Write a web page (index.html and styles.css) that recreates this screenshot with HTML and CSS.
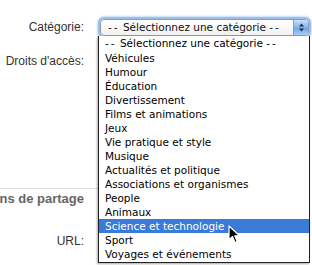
FILE: index.html
```html
<!DOCTYPE html>
<html>
    <head>
        <meta charset="UTF-8">
        <title>Catégorie</title>
        <link rel="stylesheet" href="styles.css">
    </head>
    <body>
        <div class="video-form">
            <div class="form-row row-category">
                <label class="form-label">Catégorie:</label>
                <div class="select-box">
                    <span class="select-value"><span class="dashes">--</span> Sélectionnez une catégorie <span class="dashes">--</span></span>
                    <span class="select-arrows">
                        <svg width="7" height="11" viewBox="0 0 7 11">
                            <path d="M3.5 1.5 L6 4.5 H1 Z" fill="#1d2b45"/>
                            <path d="M3.5 9.5 L6 6.5 H1 Z" fill="#1d2b45"/>
                        </svg>
                    </span>
                </div>
            </div>
            <div class="form-row row-rights">
                <label class="form-label">Droits d'accès:</label>
            </div>
            <div class="form-section">
                <h3 class="section-title"><span>Options de partage</span></h3>
            </div>
            <div class="form-row row-url">
                <label class="form-label">URL:</label>
            </div>

            <ul class="category-menu">
                <li><span class="dashes">--</span> Sélectionnez une catégorie <span class="dashes">--</span></li>
                <li>Véhicules</li>
                <li>Humour</li>
                <li>Éducation</li>
                <li>Divertissement</li>
                <li>Films et animations</li>
                <li>Jeux</li>
                <li>Vie pratique et style</li>
                <li>Musique</li>
                <li>Actualités et politique</li>
                <li>Associations et organismes</li>
                <li>People</li>
                <li>Animaux</li>
                <li class="is-hover">Science et technologie</li>
                <li>Sport</li>
                <li>Voyages et événements</li>
            </ul>

            <svg class="mouse-cursor" width="13" height="19" viewBox="0 0 13 19">
                <path d="M1 1 L1 15 L4.5 11.5 L7 17.5 L9.2 16.6 L6.8 10.8 L11.5 10.8 Z" fill="#000" stroke="#fff" stroke-width="1.2" stroke-linejoin="round"/>
            </svg>
        </div>
    </body>
</html>
```

FILE: styles.css
```css
* {
    padding: 0;
    margin: 0;
    box-sizing: border-box;
}

html, body {
    height: 100%;
    width: 100%;
    background-color: #fff;
    overflow: hidden;
}

.video-form {
    position: relative;
    height: 100%;
    width: 100%;
    font-family: "Liberation Sans", Arial, sans-serif;
    font-size: 12px;
    color: #333;
}

.form-row {
    display: flex;
    align-items: center;
}

.form-label {
    width: 84px;
    text-align: right;
    flex-shrink: 0;
}

.row-category {
    padding-top: 18px;
    height: 36px;
}

.row-rights {
    margin-top: 17px;
    height: 16px;
}

.form-section {
    margin-top: 119px;
    width: 100px;
    border-top: 1px solid #ddd;
}

.section-title {
    display: flex;
    justify-content: flex-end;
    width: 84px;
    overflow: hidden;
    white-space: nowrap;
    margin-top: 2px;
    height: 15px;
    line-height: 15px;
    font-size: 13px;
    font-weight: bold;
    color: #666;
}

.row-url {
    margin-top: 27px;
    height: 16px;
}

.dashes {
    letter-spacing: 2px;
}

.select-box {
    display: flex;
    align-items: center;
    margin-left: 16px;
    width: 209px;
    height: 17px;
    border: 1px solid #8c9bb0;
    border-radius: 4px;
    background: linear-gradient(#fff, #f1f1f1);
    box-shadow: 0 0 0 2px #9cbfe9, 0 0 2px 3px #c9ddf5;
    font-family: "DejaVu Sans", sans-serif;
    font-size: 10.5px;
    color: #111;
}

.select-value {
    flex: 1;
    padding-left: 7px;
    white-space: nowrap;
}

.select-arrows {
    display: flex;
    align-items: center;
    justify-content: center;
    width: 15px;
    height: 100%;
    border-radius: 0 3px 3px 0;
    background: linear-gradient(#c9e0fa, #83b4ee 50%, #6ea6ea 55%, #a8cdf6);
    border-left: 1px solid #7d9cc6;
}

.category-menu {
    position: absolute;
    left: 98px;
    top: 36px;
    width: 212px;
    height: 227px;
    list-style: none;
    background-color: #fff;
    border: 1px solid #222;
    border-top: none;
    box-shadow: -1px 1px 2px rgba(0, 0, 0, 0.35);
    font-family: "DejaVu Sans", sans-serif;
    font-size: 10.5px;
    color: #000;
}

.category-menu li {
    height: 14px;
    line-height: 14px;
    padding-left: 6px;
    white-space: nowrap;
}

.category-menu li:first-child {
    height: 15px;
    line-height: 15px;
}

.category-menu .is-hover {
    background-color: #3a7ad9;
    color: #fff;
}

.mouse-cursor {
    position: absolute;
    left: 228px;
    top: 225px;
}
```
